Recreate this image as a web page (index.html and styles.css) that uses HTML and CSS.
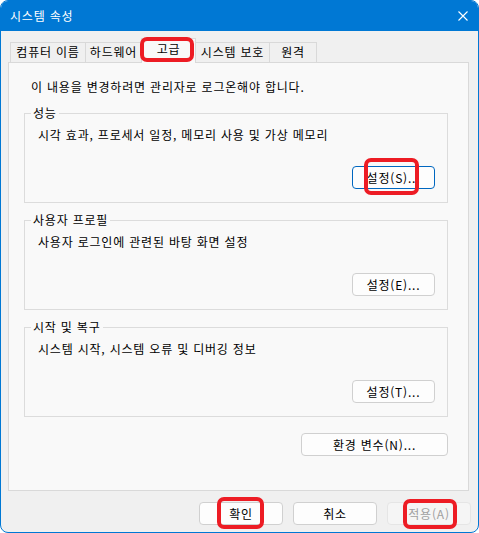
FILE: index.html
```html
<!DOCTYPE html>
<html lang="ko">
<head>
<meta charset="utf-8">
<title>시스템 속성</title>
<link rel="stylesheet" href="styles.css">
</head>
<body>
<div class="window">
  <div class="titlebar">
    <span class="title">시스템 속성</span>
    <svg class="close" width="10" height="10" viewBox="0 0 10 10"><path d="M0.5 0.5 L9.5 9.5 M9.5 0.5 L0.5 9.5" stroke="#fff" stroke-width="1.1" fill="none"/></svg>
  </div>
  <div class="tabs">
    <div class="tab t1">컴퓨터 이름</div>
    <div class="tab t2">하드웨어</div>
    <div class="tab t3 selected">고급<span class="mark mark-tab"></span></div>
    <div class="tab t4">시스템 보호</div>
    <div class="tab t5">원격</div>
  </div>
  <div class="panel">
    <p class="intro">이 내용을 변경하려면 관리자로 로그온해야 합니다.</p>
    <fieldset class="group">
      <legend>성능</legend>
      <p class="desc">시각 효과, 프로세서 일정, 메모리 사용 및 가상 메모리</p>
      <div class="group-actions"><button class="btn focused">설정(S)...<span class="mark mark-s"></span></button></div>
    </fieldset>
    <fieldset class="group">
      <legend>사용자 프로필</legend>
      <p class="desc">사용자 로그인에 관련된 바탕 화면 설정</p>
      <div class="group-actions"><button class="btn">설정(E)...</button></div>
    </fieldset>
    <fieldset class="group">
      <legend>시작 및 복구</legend>
      <p class="desc">시스템 시작, 시스템 오류 및 디버깅 정보</p>
      <div class="group-actions"><button class="btn">설정(T)...</button></div>
    </fieldset>
    <div class="env-row"><button class="btn env">환경 변수(N)...</button></div>
  </div>
  <div class="footer">
    <button class="btn foot">확인<span class="mark mark-ok"></span></button>
    <button class="btn foot">취소</button>
    <button class="btn foot disabled">적용(A)<span class="mark mark-apply"></span></button>
  </div>
</div>
</body>
</html>
```

FILE: styles.css
```css
* { box-sizing: border-box; }
html, body { margin: 0; padding: 0; background: #ffffff; }
body {
  font-family: "Noto Sans CJK KR", "Noto Sans", sans-serif;
  font-size: 12px;
  letter-spacing: 0.8px;
  color: #000;
}
.window {
  width: 479px;
  height: 533px;
  border: 1px solid #0078d4;
  border-radius: 8px;
  overflow: hidden;
  background: #f0f0f0;
  display: flex;
  flex-direction: column;
}
.titlebar {
  height: 30px;
  background: #0078d4;
  display: flex;
  align-items: center;
  padding: 0 9px 0 9px;
  flex-shrink: 0;
}
.title { color: #fff; font-size: 12px; line-height: 16px; flex: 1; }
.close { margin-right: 1px; margin-top: -1px; }

.tabs {
  display: flex;
  align-items: flex-end;
  margin: 6px 0 0 9px;
  height: 25px;
  position: relative;
  z-index: 2;
}
.tab {
  height: 20px;
  border: 1px solid #d9d9d9;
  border-bottom: none;
  background: #f0f0f0;
  text-align: center;
  line-height: 18px;
  margin-left: -1px;
  position: relative;
  white-space: nowrap;
}
.t1 { width: 76px; margin-left: 0; }
.t2 { width: 57px; }
.t3 { width: 55px; }
.t4 { width: 75px; }
.t5 { width: 48px; }
.tab.selected {
  height: 25px;
  margin-bottom: -1px;
  background: #f9f9f9;
  line-height: 20px;
  padding-bottom: 3px;
  z-index: 3;
}

.panel {
  margin-left: 7px;
  width: 461px;
  height: 429px;
  border: 1px solid #d9d9d9;
  background: #f9f9f9;
  padding: 16px 0 0 15px;
  position: relative;
  z-index: 1;
}
.intro {
  margin: 0 0 0 7px;
  line-height: 16px;
}
.group {
  margin: 10px 0 0 0;
  width: 424px;
  height: 98px;
  border: 1px solid #dcdcdc;
  padding: 0 12px 13px 13px;
  min-inline-size: 0;
}
.group + .group { margin-top: 9px; }
.group legend {
  margin-left: -7px;
  padding: 0 2px;
  line-height: 16px;
}
.desc {
  margin: 6px 0 0 0;
  line-height: 16px;
}
.group-actions {
  display: flex;
  justify-content: flex-end;
  margin-top: 23px;
}
.btn {
  font-family: inherit;
  font-size: 12px;
  letter-spacing: inherit;
  color: #000;
  height: 23px;
  width: 83px;
  border: 1px solid #d0d0d0;
  border-radius: 4px;
  background: #fdfdfd;
  padding: 0;
  line-height: 20px;
  position: relative;
}
.btn.focused { border-color: #0067c0; }
.env-row {
  display: flex;
  justify-content: flex-end;
  width: 424px;
  margin-top: 16px;
}
.btn.env { width: 147px; }

.footer {
  display: flex;
  justify-content: flex-end;
  gap: 10px;
  padding: 11px 7px 0 0;
}
.btn.foot { width: 84px; }
.btn.disabled {
  color: #a0a0a0;
  background: #f5f5f5;
  border-color: #e5e5e5;
}

.mark {
  position: absolute;
  border: 4px solid #ed1c24;
  border-radius: 7px;
  pointer-events: none;
}
.mark-tab { left: -2px; right: 1px; top: -2px; bottom: 1px; }
.mark-s { left: 11px; right: 15px; top: -9px; bottom: -7px; }
.mark-ok { left: 17px; right: 18px; top: -6px; bottom: -5px; }
.mark-apply { left: 15px; right: 13px; top: -4px; bottom: -5px; }
```
